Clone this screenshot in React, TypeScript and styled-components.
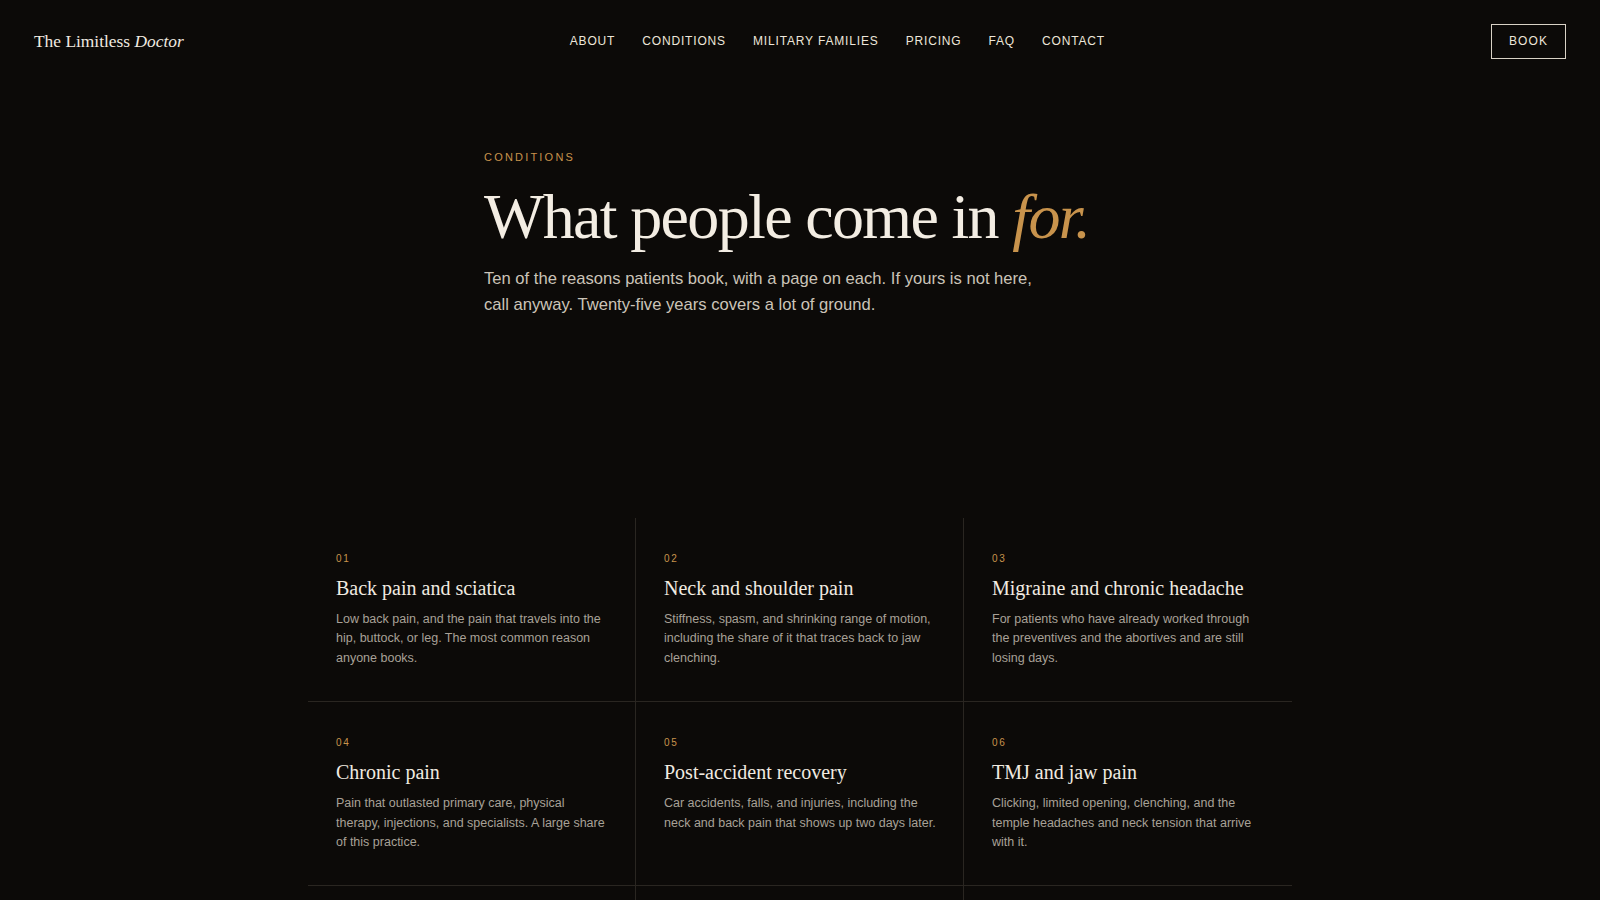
import React from "react";
import styled, { createGlobalStyle } from "styled-components";

const Global = createGlobalStyle`
  * { box-sizing: border-box; }
  html, body { margin: 0; padding: 0; background: #0c0a08; }
  body {
    color: #ede6da;
    font-family: "Liberation Sans", Arial, sans-serif;
    -webkit-font-smoothing: antialiased;
  }
`;

const Page = styled.div`
  min-height: 100vh;
  background: #0c0a08;
`;

const Header = styled.header`
  display: flex;
  align-items: center;
  justify-content: space-between;
  height: 82px;
  padding: 0 34px;
`;

const Logo = styled.a`
  font-family: "Liberation Serif", "Times New Roman", serif;
  font-size: 17.4px;
  color: #f1ebe1;
  text-decoration: none;
  em { font-style: italic; }
`;

const Nav = styled.nav`
  display: flex;
  align-items: center;
  gap: 27px;
`;

const NavLink = styled.a`
  font-size: 12px;
  letter-spacing: 0.07em;
  text-transform: uppercase;
  color: #ede6da;
  text-decoration: none;
`;

const BookButton = styled.a`
  display: inline-flex;
  align-items: center;
  justify-content: center;
  height: 35px;
  padding: 0 17px;
  border: 1px solid #d9d2c6;
  font-size: 12px;
  letter-spacing: 0.09em;
  color: #ede6da;
  text-decoration: none;
`;

const Hero = styled.section`
  width: 632px;
  margin: 0 auto;
  padding-top: 67px;
`;

const Eyebrow = styled.div`
  font-size: 11px;
  line-height: 16px;
  letter-spacing: 0.2em;
  color: #c8934c;
  text-transform: uppercase;
`;

const Title = styled.h1`
  margin: 17px 0 0;
  font-family: "Liberation Serif", "Times New Roman", serif;
  font-weight: 400;
  font-size: 64px;
  line-height: 70px;
  letter-spacing: -0.026em;
  color: #f3ede3;
  white-space: nowrap;
  em {
    font-style: italic;
    color: #c8934c;
  }
`;

const Lead = styled.p`
  margin: 14px 0 0;
  max-width: 560px;
  font-size: 16.6px;
  line-height: 26px;
  color: #cbc4b8;
`;

const Grid = styled.div`
  display: grid;
  grid-template-columns: repeat(3, 328px);
  width: 984px;
  margin: 200px auto 0;
`;

const Cell = styled.a<{ $lastCol: boolean }>`
  display: flex;
  flex-direction: column;
  padding: 34px 24px 33px 28px;
  border-bottom: 1px solid #2a2621;
  border-right: ${(p) => (p.$lastCol ? "none" : "1px solid #2a2621")};
  text-decoration: none;
`;

const Num = styled.div`
  font-size: 10px;
  line-height: 14px;
  letter-spacing: 0.18em;
  color: #c8934c;
`;

const CellTitle = styled.h3`
  margin: 9px 0 0;
  font-family: "Liberation Serif", "Times New Roman", serif;
  font-weight: 400;
  font-size: 20px;
  line-height: 26px;
  color: #f1ebe1;
`;

const CellText = styled.p`
  margin: 9px 0 0;
  font-size: 12.5px;
  line-height: 19.4px;
  color: #a8a197;
`;

const conditions = [
  {
    title: "Back pain and sciatica",
    text: "Low back pain, and the pain that travels into the hip, buttock, or leg. The most common reason anyone books.",
  },
  {
    title: "Neck and shoulder pain",
    text: "Stiffness, spasm, and shrinking range of motion, including the share of it that traces back to jaw clenching.",
  },
  {
    title: "Migraine and chronic headache",
    text: "For patients who have already worked through the preventives and the abortives and are still losing days.",
  },
  {
    title: "Chronic pain",
    text: "Pain that outlasted primary care, physical therapy, injections, and specialists. A large share of this practice.",
  },
  {
    title: "Post-accident recovery",
    text: "Car accidents, falls, and injuries, including the neck and back pain that shows up two days later.",
  },
  {
    title: "TMJ and jaw pain",
    text: "Clicking, limited opening, clenching, and the temple headaches and neck tension that arrive with it.",
  },
  {
    title: "Sports injuries",
    text: "Sprains, strains, and the overuse injuries that keep coming back every season.",
  },
  {
    title: "Arthritis and joint pain",
    text: "Knees, hips, hands, and shoulders that ache in the morning and stiffen by night.",
  },
  {
    title: "Nerve pain and neuropathy",
    text: "Burning, tingling, and numbness in the hands and feet that medication has not settled.",
  },
  {
    title: "Stress, sleep, and fatigue",
    text: "The nervous system side of chronic pain: poor sleep, tension, and days without energy.",
  },
];

const navItems = ["About", "Conditions", "Military Families", "Pricing", "FAQ", "Contact"];

export default function App() {
  return (
    <Page>
      <Global />
      <Header>
        <Logo href="#">
          The Limitless <em>Doctor</em>
        </Logo>
        <Nav>
          {navItems.map((n) => (
            <NavLink key={n} href="#">
              {n}
            </NavLink>
          ))}
        </Nav>
        <BookButton href="#">BOOK</BookButton>
      </Header>
      <Hero>
        <Eyebrow>Conditions</Eyebrow>
        <Title>
          What people come in <em>for.</em>
        </Title>
        <Lead>
          Ten of the reasons patients book, with a page on each. If yours is not here, call anyway.
          Twenty-five years covers a lot of ground.
        </Lead>
      </Hero>
      <Grid>
        {conditions.map((c, i) => (
          <Cell key={c.title} href="#" $lastCol={i % 3 === 2}>
            <Num>{String(i + 1).padStart(2, "0")}</Num>
            <CellTitle>{c.title}</CellTitle>
            <CellText>{c.text}</CellText>
          </Cell>
        ))}
      </Grid>
    </Page>
  );
}
